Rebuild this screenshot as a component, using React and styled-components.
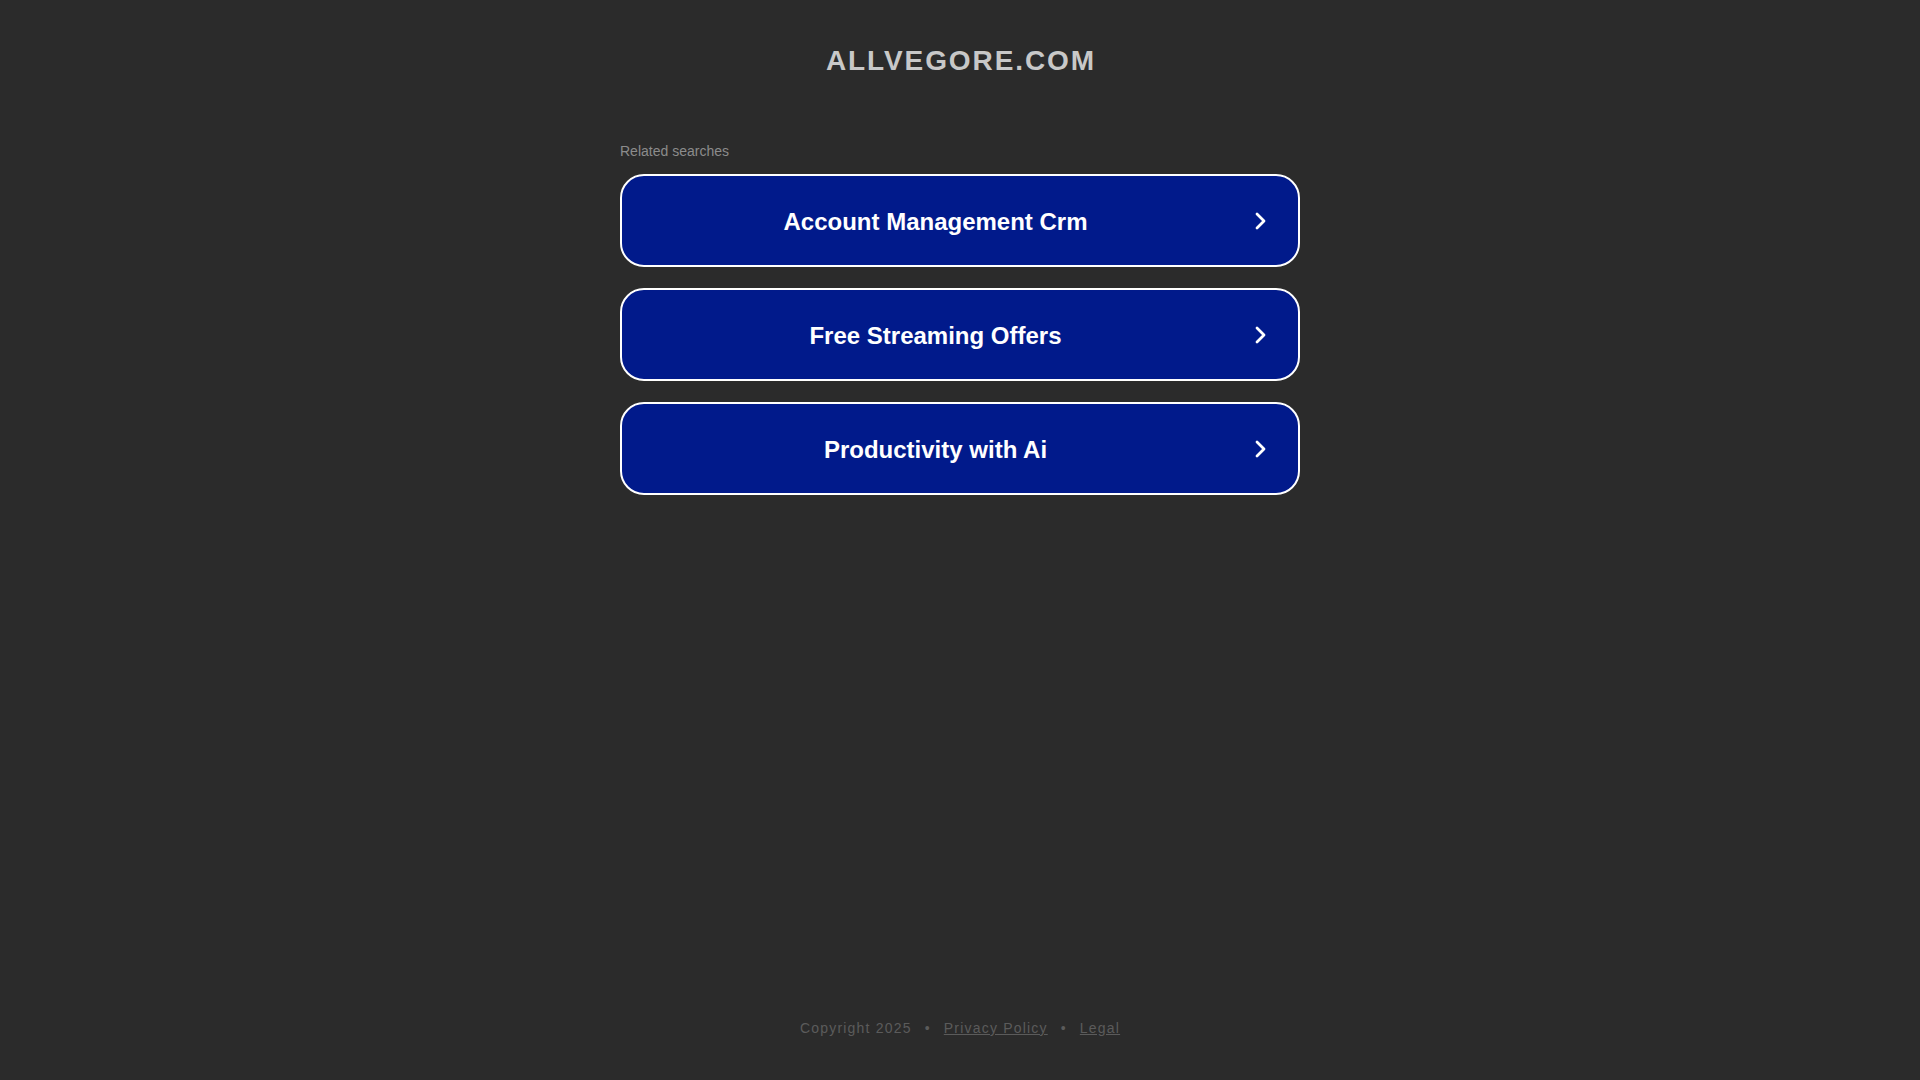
import React from "react";
import styled, { createGlobalStyle } from "styled-components";

const GlobalStyle = createGlobalStyle`
  html, body {
    margin: 0;
    padding: 0;
    background: #2b2b2b;
  }
  body {
    font-family: "Liberation Sans", Arial, sans-serif;
  }
`;

const Page = styled.div`
  display: flex;
  flex-direction: column;
  align-items: center;
  min-height: 100vh;
  box-sizing: border-box;
`;

const Header = styled.header`
  padding-top: 45px;
`;

const Title = styled.h1`
  margin: 0 -1.9px 0 0;
  font-size: 28px;
  line-height: 32px;
  font-weight: 700;
  letter-spacing: 1.9px;
  color: #c8c8c8;
  text-align: center;
`;

const Main = styled.main`
  width: 680px;
  margin-top: 66px;
  display: flex;
  flex-direction: column;
`;

const Caption = styled.div`
  font-size: 14px;
  line-height: 16px;
  color: #8c8c8c;
  margin-bottom: 15px;
`;

const List = styled.div`
  display: flex;
  flex-direction: column;
  gap: 21px;
`;

const SearchButton = styled.a`
  display: flex;
  align-items: center;
  gap: 6px;
  height: 93px;
  box-sizing: border-box;
  padding: 0 32px 0 0;
  border: 2px solid #ffffff;
  border-radius: 24px;
  background: #011a8b;
  color: #ffffff;
  text-decoration: none;
  cursor: pointer;
`;

const Label = styled.span`
  flex: 1;
  padding-top: 2px;
  text-align: center;
  font-size: 24px;
  font-weight: 700;
  line-height: 28px;
`;

const Chevron = () => (
  <svg width="11" height="18" viewBox="0 0 11 18" aria-hidden="true">
    <path
      d="M2 2 L9 9 L2 16"
      fill="none"
      stroke="#ffffff"
      strokeWidth="2.8"
      strokeLinecap="round"
      strokeLinejoin="round"
    />
  </svg>
);

const Footer = styled.footer`
  margin-top: auto;
  padding-bottom: 44px;
  display: flex;
  align-items: center;
  gap: 13px;
  font-size: 14px;
  line-height: 16px;
  letter-spacing: 1.2px;
  color: #5b5b5b;
`;

const FooterLink = styled.a`
  color: #5b5b5b;
  text-decoration: underline;
  cursor: pointer;
`;

const searches = [
  "Account Management Crm",
  "Free Streaming Offers",
  "Productivity with Ai",
];

export default function App() {
  return (
    <>
      <GlobalStyle />
      <Page>
        <Header>
          <Title>ALLVEGORE.COM</Title>
        </Header>
        <Main>
          <Caption>Related searches</Caption>
          <List>
            {searches.map((s) => (
              <SearchButton key={s}>
                <Label>{s}</Label>
                <Chevron />
              </SearchButton>
            ))}
          </List>
        </Main>
        <Footer>
          <span>Copyright 2025</span>
          <span>•</span>
          <FooterLink>Privacy Policy</FooterLink>
          <span>•</span>
          <FooterLink>Legal</FooterLink>
        </Footer>
      </Page>
    </>
  );
}
